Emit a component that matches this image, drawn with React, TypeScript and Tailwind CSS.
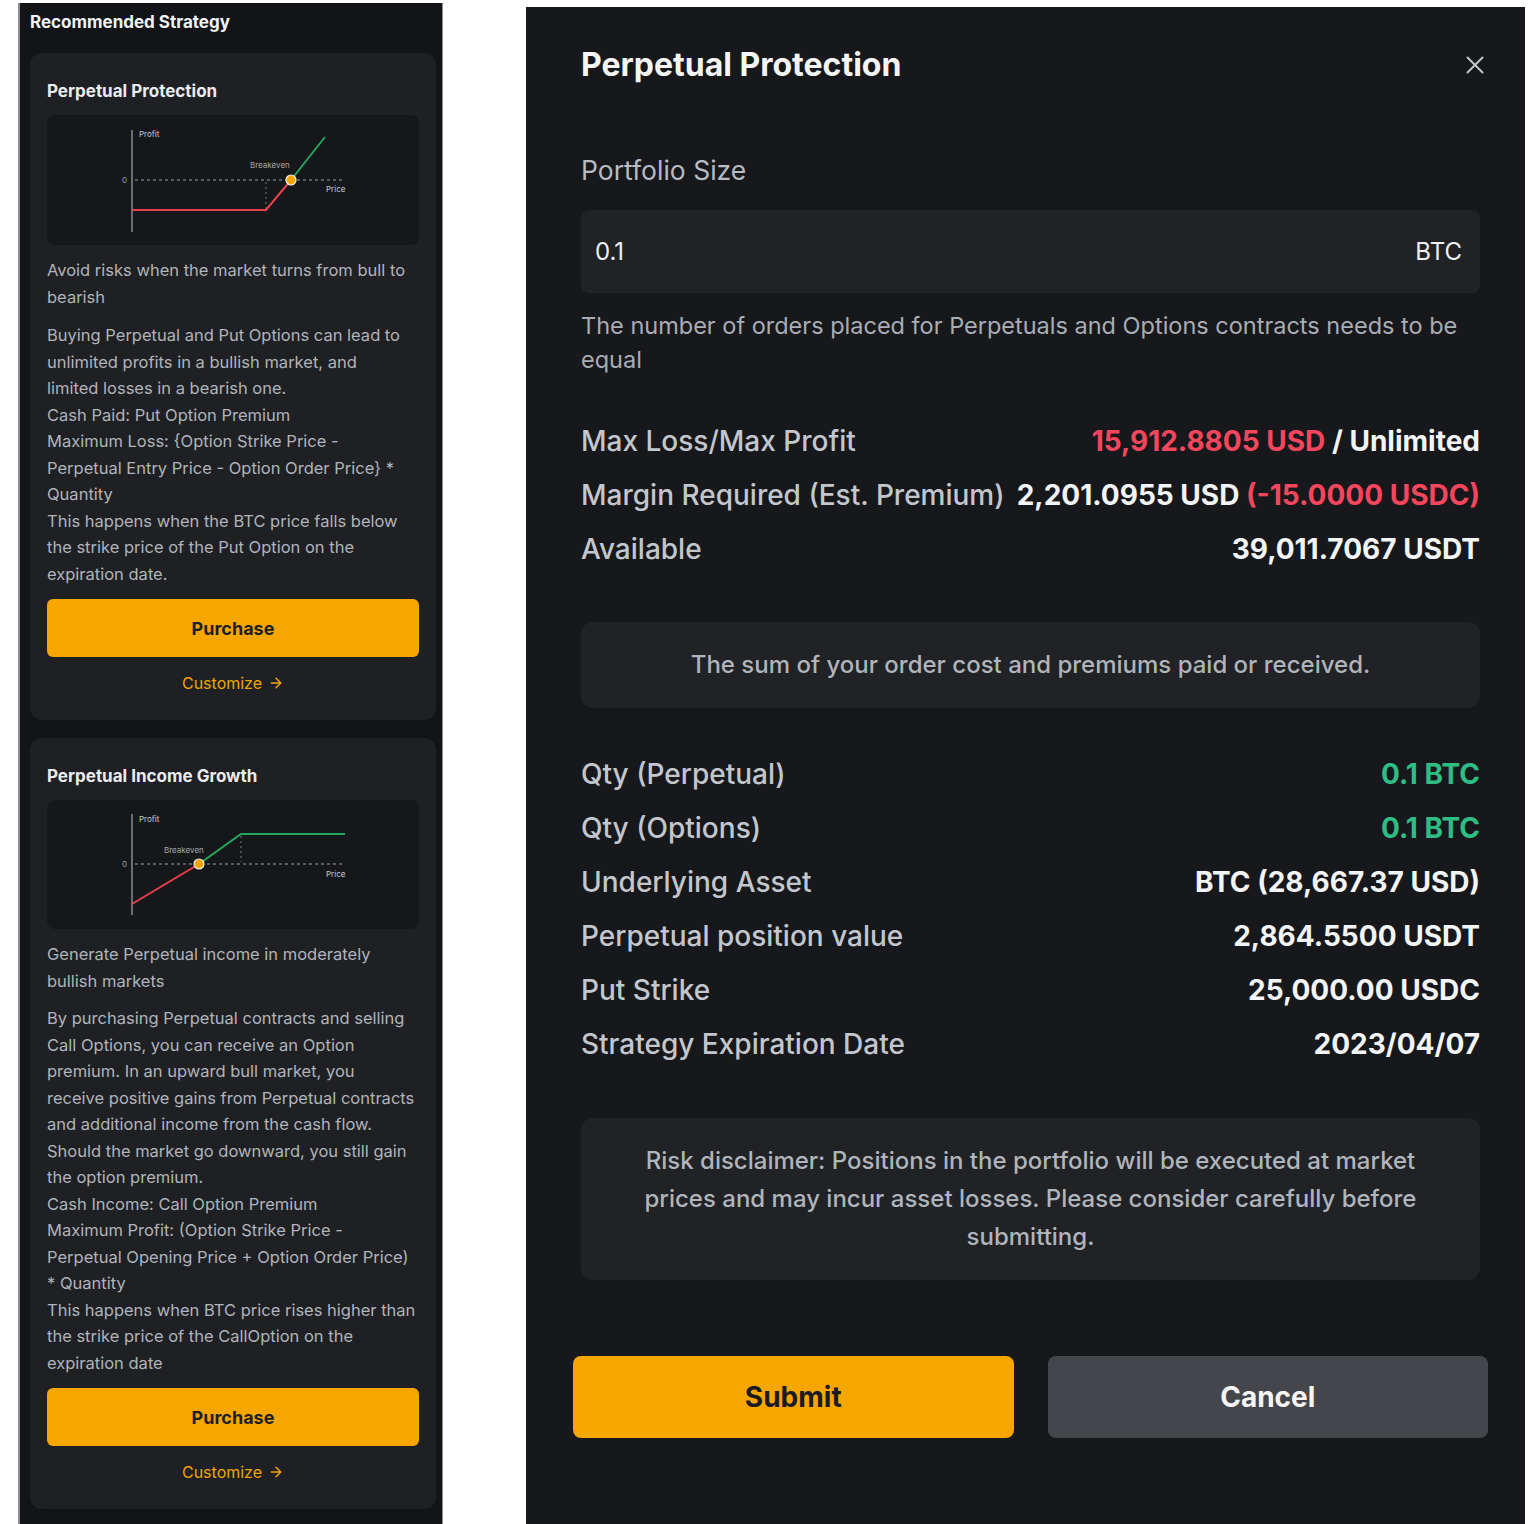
import { ArrowRight, X } from 'lucide-react';

const font = { fontFamily: 'Inter, Roboto, "Liberation Sans", sans-serif' };

function ProtectionChart() {
  return (
    <svg width="371" height="130" viewBox="0 0 371 130">
      <line x1="85" y1="15" x2="85" y2="117" stroke="#8a8d93" strokeWidth="1.5" />
      <text x="92" y="22" fill="#c9ccd1" fontSize="8">Profit</text>
      <text x="75" y="68" fill="#9a9ea5" fontSize="8">0</text>
      <line x1="88" y1="65" x2="298" y2="65" stroke="#9a9ea5" strokeWidth="1" strokeDasharray="3 3" />
      <line x1="219" y1="67" x2="219" y2="95" stroke="#7a7d83" strokeWidth="1" strokeDasharray="2 3" />
      <polyline points="85,95 219,95 244,65" fill="none" stroke="#e8414d" strokeWidth="2" />
      <line x1="244" y1="65" x2="278" y2="22" stroke="#22a85d" strokeWidth="2" />
      <text x="203" y="53" fill="#a5a9af" fontSize="8">Breakeven</text>
      <text x="279" y="77" fill="#c9ccd1" fontSize="8">Price</text>
      <circle cx="244" cy="65" r="5" fill="#f7a600" stroke="#f2f2f2" strokeWidth="1.2" />
    </svg>
  );
}

function IncomeChart() {
  return (
    <svg width="371" height="129" viewBox="0 0 371 129">
      <line x1="85" y1="14" x2="85" y2="115" stroke="#8a8d93" strokeWidth="1.5" />
      <text x="92" y="22" fill="#c9ccd1" fontSize="8">Profit</text>
      <text x="75" y="67" fill="#9a9ea5" fontSize="8">0</text>
      <line x1="88" y1="64" x2="298" y2="64" stroke="#9a9ea5" strokeWidth="1" strokeDasharray="3 3" />
      <line x1="194" y1="36" x2="194" y2="62" stroke="#7a7d83" strokeWidth="1" strokeDasharray="2 3" />
      <line x1="85" y1="104" x2="152" y2="64" stroke="#e8414d" strokeWidth="2" />
      <polyline points="152,64 194,34 298,34" fill="none" stroke="#22a85d" strokeWidth="2" />
      <text x="117" y="53" fill="#a5a9af" fontSize="8">Breakeven</text>
      <text x="279" y="77" fill="#c9ccd1" fontSize="8">Price</text>
      <circle cx="152" cy="64" r="5" fill="#f7a600" stroke="#f2f2f2" strokeWidth="1.2" />
    </svg>
  );
}

function StrategyCard({
  title,
  chart,
  lead,
  body,
  gap,
}: {
  title: string;
  chart: React.ReactNode;
  lead: string[];
  body: string[];
  gap: string;
}) {
  return (
    <div className="bg-[#1f2024] rounded-xl px-[17px] pt-[26px] pb-[25px]">
      <h3 className="text-[17px] leading-[24px] font-bold text-[#eaecef]">{title}</h3>
      <div className="mt-3 bg-[#16171a] rounded-lg overflow-hidden">{chart}</div>
      <div className="mt-3 text-[16.5px] leading-[26.5px] text-[#b0b4bb] whitespace-nowrap">
        {lead.map((l, i) => (
          <div key={i}>{l}</div>
        ))}
      </div>
      <div className={`${gap} text-[16.5px] leading-[26.5px] text-[#b0b4bb] whitespace-nowrap`}>
        {body.map((l, i) => (
          <div key={i}>{l}</div>
        ))}
      </div>
      <button className="mt-3 w-full h-[58px] rounded-md bg-[#f7a600] text-[18px] font-bold text-[#1e2026]">
        Purchase
      </button>
      <div className="mt-[14px] flex items-center justify-center gap-[6px] text-[16px] leading-[24px] text-[#f0a500]">
        Customize <ArrowRight size={16} strokeWidth={2.2} />
      </div>
    </div>
  );
}

function Row({ label, children }: { label: string; children: React.ReactNode }) {
  return (
    <div className="h-[54px] flex items-center justify-between">
      <span className="text-[28px] font-medium text-[#c3c7cd]">{label}</span>
      <span className="text-[28px] font-bold text-[#f3f4f6]">{children}</span>
    </div>
  );
}

export default function App() {
  return (
    <div className="min-h-[1524px] w-[1530px] bg-white flex items-start" style={font}>
      {/* left: recommended strategies */}
      <div className="ml-[18px] mt-[3px] w-[425px] h-[1521px] bg-[#131417] border-l-2 border-r border-[#8d8e91] pl-[10px] pr-[6px]">
        <h2 className="pt-[7px] text-[17px] leading-[24px] font-bold text-[#f2f3f5]">Recommended Strategy</h2>
        <div className="mt-[19px] flex flex-col gap-[18px]">
          <StrategyCard
            title="Perpetual Protection"
            chart={<ProtectionChart />}
            gap="mt-3"
            lead={['Avoid risks when the market turns from bull to', 'bearish']}
            body={[
              'Buying Perpetual and Put Options can lead to',
              'unlimited profits in a bullish market, and',
              'limited losses in a bearish one.',
              'Cash Paid: Put Option Premium',
              'Maximum Loss: {Option Strike Price -',
              'Perpetual Entry Price - Option Order Price} *',
              'Quantity',
              'This happens when the BTC price falls below',
              'the strike price of the Put Option on the',
              'expiration date.',
            ]}
          />
          <StrategyCard
            title="Perpetual Income Growth"
            chart={<IncomeChart />}
            gap="mt-[11px]"
            lead={['Generate Perpetual income in moderately', 'bullish markets']}
            body={[
              'By purchasing Perpetual contracts and selling',
              'Call Options, you can receive an Option',
              'premium. In an upward bull market, you',
              'receive positive gains from Perpetual contracts',
              'and additional income from the cash flow.',
              'Should the market go downward, you still gain',
              'the option premium.',
              'Cash Income: Call Option Premium',
              'Maximum Profit: (Option Strike Price -',
              'Perpetual Opening Price + Option Order Price)',
              '* Quantity',
              'This happens when BTC price rises higher than',
              'the strike price of the CallOption on the',
              'expiration date',
            ]}
          />
        </div>
      </div>

      {/* right: order dialog */}
      <div className="ml-[83px] mt-[7px] w-[999px] h-[1517px] bg-[#17181c] pl-[55px] pr-[45px]">
        <div className="pt-[38px] flex items-center justify-between">
          <h1 className="text-[32px] leading-[40px] font-bold text-[#f5f5f5]">Perpetual Protection</h1>
          <X size={30} strokeWidth={1.5} className="text-[#c4c7cc] -mr-[10px]" />
        </div>

        <div className="mt-[67px] text-[26.5px] leading-[36px] text-[#b7bbc2]">Portfolio Size</div>
        <div className="mt-[22px] h-[83px] rounded-lg bg-[#202226] flex items-center justify-between pl-[14px] pr-[18px] text-[24px] text-[#eef0f2]">
          <span>0.1</span>
          <span>BTC</span>
        </div>
        <p className="mt-4 text-[23.5px] leading-[34px] text-[#a9adb4]">
          The number of orders placed for Perpetuals and Options contracts needs to be equal
        </p>

        <div className="mt-[37px]">
          <Row label="Max Loss/Max Profit">
            <span className="text-[#f6465d]">15,912.8805 USD</span> / Unlimited
          </Row>
          <Row label="Margin Required (Est. Premium)">
            2,201.0955 USD <span className="text-[#f6465d]">(-15.0000 USDC)</span>
          </Row>
          <Row label="Available">39,011.7067 USDT</Row>
        </div>

        <div className="mt-[46px] h-[86px] rounded-xl bg-[#202226] flex items-center justify-center text-[24px] font-medium text-[#b0b4bb]">
          The sum of your order cost and premiums paid or received.
        </div>

        <div className="mt-[39px]">
          <Row label="Qty (Perpetual)">
            <span className="text-[#2ebd85]">0.1 BTC</span>
          </Row>
          <Row label="Qty (Options)">
            <span className="text-[#2ebd85]">0.1 BTC</span>
          </Row>
          <Row label="Underlying Asset">BTC (28,667.37 USD)</Row>
          <Row label="Perpetual position value">2,864.5500 USDT</Row>
          <Row label="Put Strike">25,000.00 USDC</Row>
          <Row label="Strategy Expiration Date">2023/04/07</Row>
        </div>

        <div className="mt-[47px] h-[162px] rounded-xl bg-[#202226] flex items-center justify-center px-[50px] text-center text-[24px] leading-[38px] font-medium text-[#b0b4bb]">
          Risk disclaimer: Positions in the portfolio will be executed at market prices and may incur asset losses. Please consider carefully before submitting.
        </div>

        <div className="mt-[76px] -ml-[8px] -mr-[8px] flex gap-[34px]">
          <button className="flex-1 h-[82px] rounded-lg bg-[#f7a600] text-[28px] font-bold text-[#1b1c20]">Submit</button>
          <button className="flex-1 h-[82px] rounded-lg bg-[#45464b] text-[28px] font-bold text-[#f5f5f5]">Cancel</button>
        </div>
      </div>
    </div>
  );
}
